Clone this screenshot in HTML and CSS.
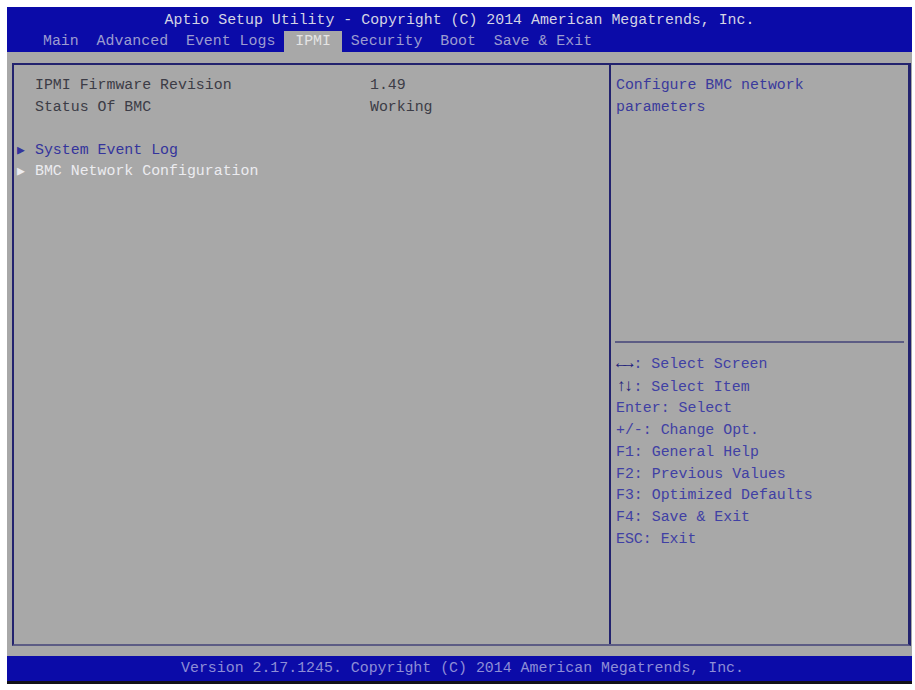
FILE: index.html
```
<!DOCTYPE html>
<html lang="en">
<head>
    <meta charset="UTF-8">
    <meta name="viewport" content="width=device-width, initial-scale=1.0">
    <title>Aptio Setup Utility - IPMI</title>
    <link rel="stylesheet" href="styles.css">
</head>
<body>

<div class="screen">
    <div class="header">
        <div class="title">Aptio Setup Utility - Copyright (C) 2014 American Megatrends, Inc.</div>
        <div class="tabs"><span class="tab">Main  Advanced  Event Logs </span><span class="tab active"> IPMI </span><span class="tab"> Security  Boot  Save &amp; Exit</span></div>
    </div>

    <div class="main">
        <div class="frame">
            <div class="settings">
                <div class="row">
                    <span class="mark"></span>
                    <span class="label">IPMI Firmware Revision</span>
                    <span class="value">1.49</span>
                </div>
                <div class="row">
                    <span class="mark"></span>
                    <span class="label">Status Of BMC</span>
                    <span class="value">Working</span>
                </div>
                <div class="row empty"></div>
                <div class="row link">
                    <span class="mark">&#9654;</span>
                    <span class="label">System Event Log</span>
                </div>
                <div class="row link selected">
                    <span class="mark">&#9654;</span>
                    <span class="label">BMC Network Configuration</span>
                </div>
            </div>

            <div class="help">
                <div class="help-text">
                    <div>Configure BMC network</div>
                    <div>parameters</div>
                </div>
                <div class="help-keys">
                    <div><b>&larr;&rarr;</b>: Select Screen</div>
                    <div><b>&uarr;&darr;</b>: Select Item</div>
                    <div>Enter: Select</div>
                    <div>+/-: Change Opt.</div>
                    <div>F1: General Help</div>
                    <div>F2: Previous Values</div>
                    <div>F3: Optimized Defaults</div>
                    <div>F4: Save &amp; Exit</div>
                    <div>ESC: Exit</div>
                </div>
            </div>
        </div>
    </div>

    <div class="footer">Version 2.17.1245. Copyright (C) 2014 American Megatrends, Inc.</div>
</div>

</body>
</html>
```

FILE: styles.css
```
body {
    margin: 0;
    background: #ffffff;
    font-family: "Liberation Mono", "DejaVu Sans Mono", monospace;
    font-size: 14.9px;
}
.screen {
    margin: 7px 3px 6px 7px;
    height: 677px;
    display: flex;
    flex-direction: column;
    background: #a8a8a8;
}
.header {
    background: #0b0ba8;
    height: 45px;
}
.title {
    text-align: center;
    color: #d4d4e4;
    line-height: 22px;
    padding-top: 2px;
}
.tabs {
    white-space: pre;
    line-height: 21px;
    padding-left: 36px;
}
.tab {
    color: #9c9cd0;
    display: inline-block;
}
.tab.active {
    background: #a8a8a8;
    color: #e4e4e4;
    padding: 0 2px;
}
.main {
    flex: 1;
    padding: 11px 1px 10px 5px;
    display: flex;
}
.frame {
    flex: 1;
    display: flex;
    border: 2px solid #22226e;
    border-bottom-color: #5c5c84;
    border-right-width: 3px;
}
.settings {
    width: 592px;
    padding: 10px 0 0 3px;
    border-right: 2px solid #22226e;
}
.row {
    display: flex;
    line-height: 21.6px;
    height: 21.6px;
    color: #3c3c46;
}
.mark {
    width: 18px;
    font-size: 13px;
}
.label {
    width: 335px;
}
.row.link {
    color: #34349c;
}
.row.selected {
    color: #ececf0;
}
.help {
    flex: 1;
    display: flex;
    flex-direction: column;
}
.help-text {
    height: 266px;
    padding: 10px 0 0 1px;
    line-height: 21.6px;
    color: #3a3a9c;
    border-bottom: 2px solid #5c5c84;
    margin: 0 4px;
}
.help-keys {
    padding: 10px 0 0 5px;
    line-height: 21.7px;
    color: #4040a4;
}
.help-keys b {
    color: #22227a;
    font-size: 17px;
    letter-spacing: -3px;
    margin-right: 3px;
}
.footer {
    background: #0b0ba8;
    border-bottom: 3px solid #111118;
    height: 25px;
    line-height: 25px;
    text-align: center;
    color: #8e8ed6;
    padding-left: 6px;
}
```
